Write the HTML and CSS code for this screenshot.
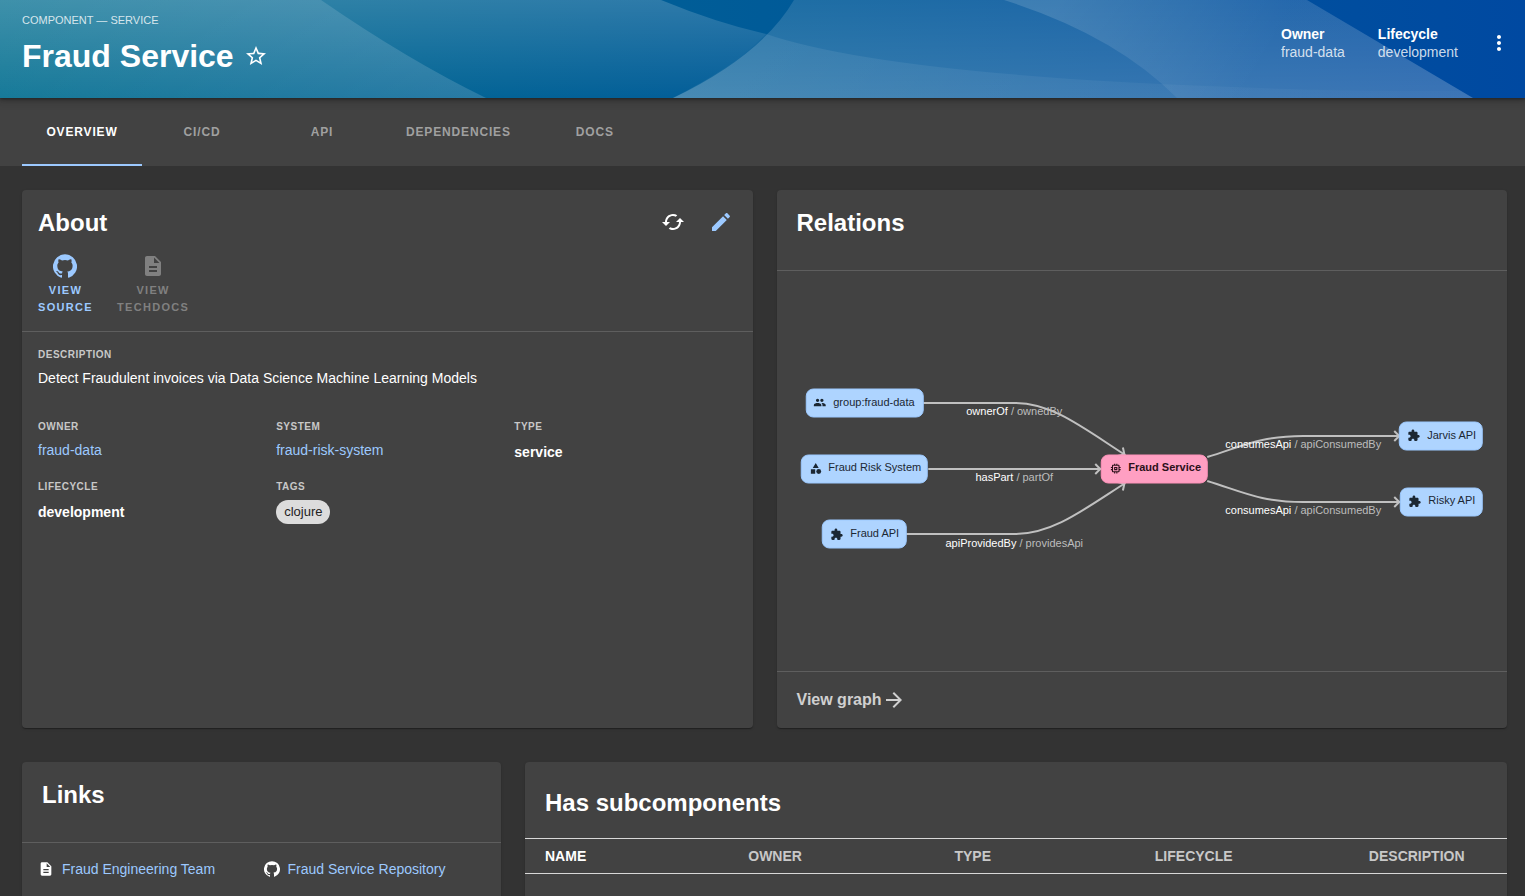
FILE: index.html
```html
<!DOCTYPE html>
<html lang="en">
<head>
<meta charset="utf-8">
<meta name="viewport" content="width=device-width, initial-scale=1">
<title>Fraud Service</title>
<link rel="stylesheet" href="styles.css">
</head>
<body>
<svg class="sprite" aria-hidden="true">
  <symbol id="i-star" viewBox="0 0 24 24"><path d="M22 9.24l-7.19-.62L12 2 9.19 8.63 2 9.24l5.46 4.73L5.82 21 12 17.27 18.18 21l-1.63-7.03L22 9.24zM12 15.4l-3.76 2.27 1-4.28-3.32-2.88 4.38-.38L12 6.1l1.71 4.04 4.38.38-3.32 2.88 1 4.28L12 15.4z"/></symbol>
  <symbol id="i-more" viewBox="0 0 24 24"><path d="M12 8c1.1 0 2-.9 2-2s-.9-2-2-2-2 .9-2 2 .9 2 2 2zm0 2c-1.1 0-2 .9-2 2s.9 2 2 2 2-.9 2-2-.9-2-2-2zm0 6c-1.1 0-2 .9-2 2s.9 2 2 2 2-.9 2-2-.9-2-2-2z"/></symbol>
  <symbol id="i-refresh" viewBox="0 0 24 24"><path d="M19 8l-4 4h3c0 3.31-2.69 6-6 6-1.01 0-1.97-.25-2.8-.7l-1.46 1.46C8.97 19.54 10.43 20 12 20c4.42 0 8-3.58 8-8h3l-4-4zM6 12c0-3.31 2.69-6 6-6 1.01 0 1.97.25 2.8.7l1.46-1.46C15.03 4.46 13.57 4 12 4c-4.42 0-8 3.58-8 8H1l4 4 4-4H6z"/></symbol>
  <symbol id="i-edit" viewBox="0 0 24 24"><path d="M3 17.25V21h3.75L17.81 9.94l-3.75-3.75L3 17.25zM20.71 7.04c.39-.39.39-1.02 0-1.41l-2.34-2.34c-.39-.39-1.02-.39-1.41 0l-1.83 1.83 3.75 3.75 1.83-1.83z"/></symbol>
  <symbol id="i-github" viewBox="0 0 24 24"><path d="M12 .3a12 12 0 0 0-3.8 23.4c.6.1.8-.3.8-.6v-2c-3.3.7-4-1.6-4-1.6-.6-1.4-1.4-1.8-1.4-1.8-1-.7.1-.7.1-.7 1.2 0 1.9 1.2 1.9 1.2 1 1.8 2.8 1.3 3.5 1 0-.8.4-1.3.7-1.6-2.7-.3-5.5-1.3-5.5-6 0-1.2.5-2.3 1.3-3.1-.2-.4-.6-1.6 0-3.2 0 0 1-.3 3.4 1.2a11.5 11.5 0 0 1 6 0c2.3-1.5 3.3-1.2 3.3-1.2.6 1.6.2 2.8 0 3.2.9.8 1.3 1.9 1.3 3.2 0 4.6-2.8 5.6-5.5 5.9.5.4.9 1 .9 2.2v3.3c0 .3.1.7.8.6A12 12 0 0 0 12 .3"/></symbol>
  <symbol id="i-doc" viewBox="0 0 24 24"><path d="M14 2H6c-1.1 0-1.99.9-1.99 2L4 20c0 1.1.89 2 1.99 2H18c1.1 0 2-.9 2-2V8l-6-6zm2 16H8v-2h8v2zm0-4H8v-2h8v2zm-3-5V3.5L18.5 9H13z"/></symbol>
  <symbol id="i-people" viewBox="0 0 24 24"><path d="M16 11c1.66 0 2.99-1.34 2.99-3S17.66 5 16 5c-1.66 0-3 1.34-3 3s1.34 3 3 3zm-8 0c1.66 0 2.99-1.34 2.99-3S9.66 5 8 5C6.34 5 5 6.34 5 8s1.34 3 3 3zm0 2c-2.33 0-7 1.17-7 3.5V19h14v-2.5c0-2.33-4.67-3.5-7-3.5zm8 0c-.29 0-.62.02-.97.05 1.16.84 1.97 1.97 1.97 3.45V19h6v-2.5c0-2.33-4.67-3.5-7-3.5z"/></symbol>
  <symbol id="i-category" viewBox="0 0 24 24"><path d="M12 2l-5.5 9h11zM3 13.5h8v8H3z"/><circle cx="17.5" cy="17.5" r="4.5"/></symbol>
  <symbol id="i-extension" viewBox="0 0 24 24"><path d="M20.5 11H19V7c0-1.1-.9-2-2-2h-4V3.5C13 2.12 11.88 1 10.5 1S8 2.12 8 3.5V5H4c-1.1 0-1.99.9-1.99 2v3.8H3.5c1.49 0 2.7 1.21 2.7 2.7s-1.21 2.7-2.7 2.7H2V20c0 1.1.9 2 2 2h3.8v-1.5c0-1.49 1.21-2.7 2.7-2.7 1.49 0 2.7 1.21 2.7 2.7V22H17c1.1 0 2-.9 2-2v-4h1.5c1.38 0 2.5-1.12 2.5-2.5S21.88 11 20.5 11z"/></symbol>
  <symbol id="i-memory" viewBox="0 0 24 24"><path d="M15 9H9v6h6V9zm-2 4h-2v-2h2v2zm8-2V9h-2V7c0-1.1-.9-2-2-2h-2V3h-2v2h-2V3H9v2H7c-1.1 0-2 .9-2 2v2H3v2h2v2H3v2h2v2c0 1.1.9 2 2 2h2v2h2v-2h2v2h2v-2h2c1.1 0 2-.9 2-2v-2h2v-2h-2v-2h2zm-4 6H7V7h10v10z"/></symbol>
  <symbol id="i-arrow" viewBox="0 0 24 24"><path d="M12 4l-1.41 1.41L16.17 11H4v2h12.17l-5.58 5.59L12 20l8-8z"/></symbol>
</svg>

<header class="header">
  <svg class="header-wave" viewBox="0 0 1525 98" preserveAspectRatio="none" aria-hidden="true">
    <defs>
      <linearGradient id="w1" x1="0" y1="0" x2="0" y2="1"><stop offset="0" stop-color="#fff" stop-opacity=".18"/><stop offset="1" stop-color="#fff" stop-opacity=".01"/></linearGradient>
      <linearGradient id="w2" x1="0" y1="0" x2="1" y2="0"><stop offset="0" stop-color="#fff" stop-opacity=".08"/><stop offset="1" stop-color="#fff" stop-opacity=".15"/></linearGradient>
      <linearGradient id="w3" x1="0" y1="0" x2="0" y2="1"><stop offset="0" stop-color="#fff" stop-opacity=".12"/><stop offset="1" stop-color="#fff" stop-opacity=".21"/></linearGradient>
      <linearGradient id="w4" x1="0" y1="0" x2="1" y2="0"><stop offset="0" stop-color="#fff" stop-opacity=".09"/><stop offset="1" stop-color="#fff" stop-opacity=".01"/></linearGradient>
      <linearGradient id="w5" gradientUnits="userSpaceOnUse" x1="1060" y1="0" x2="1240" y2="98"><stop offset="0" stop-color="#fff" stop-opacity=".14"/><stop offset="1" stop-color="#fff" stop-opacity=".03"/></linearGradient>
    </defs>
    <path fill="url(#w1)" d="M0 0H661Q717 23 766 34Q736 66 673 98H0z"/>
    <path fill="url(#w2)" d="M0 0H321Q408 60 486 98H0z"/>
    <path fill="url(#w3)" d="M794 0H1307L1473 98H673Q762 55 794 0z"/>
    <path fill="url(#w4)" d="M766 34Q890 76 1260 88Q1330 91 1461 91L1473 98H673Q736 66 766 34z"/>
    <path fill="url(#w5)" d="M1004 0H1307L1473 98H1177Q1115 35 1004 0z"/>
  </svg>
  <div class="header-main">
    <p class="header-type">COMPONENT — SERVICE</p>
    <div class="header-title">
      <h1>Fraud Service</h1>
      <button class="icon-button" type="button" aria-label="Add to favorites"><svg class="icon"><use href="#i-star"/></svg></button>
    </div>
  </div>
  <dl class="header-facts">
    <div><dt>Owner</dt><dd>fraud-data</dd></div>
    <div><dt>Lifecycle</dt><dd>development</dd></div>
  </dl>
  <button class="icon-button" type="button" aria-label="More"><svg class="icon"><use href="#i-more"/></svg></button>
</header>

<nav class="tabs" aria-label="Entity">
  <a class="tab tab-active" href="#overview" aria-current="page">OVERVIEW</a>
  <a class="tab" href="#ci-cd">CI/CD</a>
  <a class="tab" href="#api">API</a>
  <a class="tab" href="#dependencies">DEPENDENCIES</a>
  <a class="tab" href="#docs">DOCS</a>
</nav>

<main class="content">
  <section class="card span-6">
    <div class="about-head">
      <div class="about-title">
        <h2>About</h2>
        <div class="about-actions">
          <button class="icon-button" type="button" aria-label="Refresh"><svg class="icon"><use href="#i-refresh"/></svg></button>
          <a class="icon-button accent" href="#edit" aria-label="Edit"><svg class="icon"><use href="#i-edit"/></svg></a>
        </div>
      </div>
      <div class="about-links">
        <a class="about-link accent" href="#source"><svg class="icon"><use href="#i-github"/></svg><span>VIEW<br>SOURCE</span></a>
        <button class="about-link" type="button" disabled><svg class="icon"><use href="#i-doc"/></svg><span>VIEW<br>TECHDOCS</span></button>
      </div>
    </div>
    <dl class="facts">
      <div class="fact fact-wide"><dt>DESCRIPTION</dt><dd>Detect Fraudulent invoices via Data Science Machine Learning Models</dd></div>
      <div class="fact"><dt>OWNER</dt><dd><a class="accent" href="#fraud-data">fraud-data</a></dd></div>
      <div class="fact"><dt>SYSTEM</dt><dd><a class="accent" href="#fraud-risk-system">fraud-risk-system</a></dd></div>
      <div class="fact"><dt>TYPE</dt><dd class="strong">service</dd></div>
      <div class="fact"><dt>LIFECYCLE</dt><dd class="strong">development</dd></div>
      <div class="fact"><dt>TAGS</dt><dd class="tags"><span class="chip">clojure</span></dd></div>
    </dl>
  </section>

  <section class="card span-6">
    <div class="card-head"><h2>Relations</h2></div>
    <svg class="graph" viewBox="0 0 730 400" role="img" aria-label="Relations graph">
      <defs>
        <marker id="tip" viewBox="0 0 9 12" refX="8" refY="6" markerWidth="9" markerHeight="12" markerUnits="userSpaceOnUse" orient="auto"><path class="edge" d="M2 1L7 6L2 11"/></marker>
      </defs>
      <g class="edges">
        <path class="edge" marker-end="url(#tip)" d="M146 132H238C275 132 306 157 348 184"/>
        <path class="edge" marker-end="url(#tip)" d="M151 198H324"/>
        <path class="edge" marker-end="url(#tip)" d="M129 263H238C275 263 306 239 348 212"/>
        <path class="edge" marker-end="url(#tip)" d="M430 186C466 175 483 165 526 165H623"/>
        <path class="edge" marker-end="url(#tip)" d="M430 210C466 221 483 231 526 231H623"/>
      </g>
      <g class="edge-labels">
        <text x="237" y="144">ownerOf <tspan class="dim">/ ownedBy</tspan></text>
        <text x="237" y="210">hasPart <tspan class="dim">/ partOf</tspan></text>
        <text x="237" y="276">apiProvidedBy <tspan class="dim">/ providesApi</tspan></text>
        <text x="526" y="177">consumesApi <tspan class="dim">/ apiConsumedBy</tspan></text>
        <text x="526" y="243">consumesApi <tspan class="dim">/ apiConsumedBy</tspan></text>
      </g>
      <g class="node"><rect x="29" y="118" width="117" height="28" rx="7"/><use href="#i-people" x="36" y="125" width="13" height="13"/><text x="56" y="135">group:fraud-data</text></g>
      <g class="node"><rect x="24" y="184" width="126" height="28" rx="7"/><use href="#i-category" x="32" y="191" width="13" height="13"/><text x="51" y="200">Fraud Risk System</text></g>
      <g class="node"><rect x="45" y="249" width="84" height="28" rx="7"/><use href="#i-extension" x="53" y="257" width="13" height="13"/><text x="73" y="266">Fraud API</text></g>
      <g class="node node-root"><rect x="324" y="184" width="106" height="28" rx="7"/><use href="#i-memory" x="332" y="191" width="13" height="13"/><text x="351" y="200">Fraud Service</text></g>
      <g class="node"><rect x="622" y="151" width="83" height="28" rx="7"/><use href="#i-extension" x="630" y="158" width="13" height="13"/><text x="650" y="168">Jarvis API</text></g>
      <g class="node"><rect x="623" y="217" width="82" height="28" rx="7"/><use href="#i-extension" x="631" y="224" width="13" height="13"/><text x="651" y="233">Risky API</text></g>
    </svg>
    <a class="card-foot" href="#graph">View graph<svg class="icon"><use href="#i-arrow"/></svg></a>
  </section>

  <section class="card span-4">
    <div class="card-head"><h2>Links</h2></div>
    <ul class="links">
      <li><svg class="icon icon-small"><use href="#i-doc"/></svg><a class="accent" href="#team">Fraud Engineering Team</a></li>
      <li><svg class="icon icon-small"><use href="#i-github"/></svg><a class="accent" href="#repo">Fraud Service Repository</a></li>
    </ul>
  </section>

  <section class="card span-8">
    <h2 class="table-title" id="sub">Has subcomponents</h2>
    <table class="table" aria-labelledby="sub">
      <colgroup><col class="col-name"><col class="col-owner"><col class="col-type"><col class="col-lifecycle"><col></colgroup>
      <thead><tr><th scope="col" class="sorted">NAME</th><th scope="col">OWNER</th><th scope="col">TYPE</th><th scope="col">LIFECYCLE</th><th scope="col">DESCRIPTION</th></tr></thead>
    </table>
  </section>
</main>
</body>
</html>
```
FILE: styles.css
```css
* { box-sizing: border-box; }

html, body { height: 100%; }

body {
  margin: 0;
  background: #333;
  color: #fff;
  font: 14px/20px "Liberation Sans", Helvetica, Arial, sans-serif;
  display: flex;
  flex-direction: column;
  overflow: hidden;
}

h1, h2, p, dl, dd, ul { margin: 0; padding: 0; }
h2 { font-size: 24px; line-height: 28px; }
a { color: inherit; text-decoration: none; }
button { font: inherit; color: inherit; background: none; border: 0; padding: 0; }

.sprite { display: none; }
.icon { display: block; width: 24px; height: 24px; fill: currentColor; flex: none; }
.icon-small { width: 16px; height: 16px; }
.icon-button { display: block; cursor: pointer; }
.accent { color: #9cc9ff; }

.header {
  position: relative;
  z-index: 1;
  flex: none;
  display: flex;
  align-items: flex-start;
  height: 98px;
  padding: 12px 14px 0 22px;
  background: linear-gradient(90deg, #006d8f, #0049a1);
  box-shadow: 0 0 8px 3px rgba(20, 20, 20, .3), 0 1px 3px rgba(0, 0, 0, .4);
}
.header > * { position: relative; }
.header .header-wave { position: absolute; inset: 0; width: 100%; height: 100%; }
.header-main { flex: 1; }
.header-type { font-size: 11px; line-height: 16px; color: rgba(255, 255, 255, .8); }
.header-title { display: flex; align-items: center; gap: 10px; margin-top: 8px; }
.header-title h1 { font-size: 32px; line-height: 40px; }
.header-facts { display: flex; gap: 33px; margin: 13px 29px 0 0; line-height: 18px; }
.header-facts dt { font-weight: bold; }
.header-facts dd { color: rgba(255, 255, 255, .8); }
.header > .icon-button { margin-top: 19px; }

.tabs { flex: none; display: flex; padding: 0 22px; background: #424242; }
.tab {
  min-width: 120px;
  height: 68px;
  padding: 24px 24px 0;
  border-bottom: 2px solid transparent;
  color: #a0a0a0;
  font-size: 12px;
  font-weight: bold;
  letter-spacing: 0.07em;
  text-align: center;
}
.tab-active { color: #fff; border-bottom-color: #9cc9ff; }

.content {
  flex: none;
  display: grid;
  grid-template-columns: repeat(12, minmax(0, 1fr));
  gap: 34px 24px;
  padding: 24px 18px 24px 22px;
}
.span-4 { grid-column: span 4; }
.span-6 { grid-column: span 6; }
.span-8 { grid-column: span 8; }
.card {
  background: #424242;
  border-radius: 4px;
  box-shadow: 0 2px 1px -1px rgba(0, 0, 0, .2), 0 1px 1px rgba(0, 0, 0, .14), 0 1px 3px rgba(0, 0, 0, .12);
}
.card-head { height: 81px; padding: 19px 20px; border-bottom: 1px solid #5e5e5e; }

.about-head { padding: 19px 20px 15px 16px; border-bottom: 1px solid #5e5e5e; }
.about-title { display: flex; justify-content: space-between; }
.about-actions { display: flex; align-items: flex-start; gap: 24px; padding-top: 1px; }
.about-links { display: flex; gap: 24px; margin-top: 17px; }
.about-link {
  display: flex;
  flex-direction: column;
  align-items: center;
  gap: 4px;
  font-size: 11px;
  line-height: 17px;
  font-weight: bold;
  letter-spacing: 0.12em;
  text-align: center;
}
.about-link:disabled { color: #808080; }

.facts {
  display: grid;
  grid-template-columns: repeat(3, minmax(0, 1fr));
  padding: 16px 0 16px 16px;
}
.fact { min-height: 60px; }
.fact-wide { grid-column: 1 / -1; min-height: 72px; }
.fact dt {
  color: #c8c8c8;
  font-size: 10px;
  line-height: 14px;
  font-weight: bold;
  letter-spacing: 0.05em;
}
.fact dd { margin-top: 6px; }
.fact .strong { margin-top: 8px; font-weight: bold; }
.fact .tags { display: flex; }
.chip {
  padding: 0 8px;
  border-radius: 12px;
  background: #dcdcdc;
  color: #222;
  font-size: 13px;
  line-height: 24px;
}

.graph { display: block; width: 100%; height: 400px; font-size: 11px; }
.edge { fill: none; stroke: #c0c0c0; stroke-width: 2px; }
.edge-labels { fill: #fff; text-anchor: middle; }
.edge-labels .dim { fill: #bdbdbd; }
.node { fill: #1b2733; }
.node rect { fill: #aed4ff; stroke: #9cc9ff; }
.node-root { fill: #2b1019; font-weight: bold; }
.node-root rect { fill: #ff9fc2; stroke: #ff93ba; }

.card-foot {
  display: flex;
  align-items: center;
  height: 57px;
  padding: 0 20px;
  border-top: 1px solid #5e5e5e;
  color: #d0d0d0;
  font-size: 16px;
  font-weight: bold;
}

.links { display: grid; grid-template-columns: repeat(2, minmax(0, 1fr)); gap: 4px; padding: 16px 16px 24px; list-style: none; }
.links li { display: flex; align-items: center; gap: 8px; }

.table-title { padding: 27px 20px 21px; }
.table { width: 100%; border-collapse: collapse; table-layout: fixed; }
.table th {
  height: 35px;
  padding: 0 20px;
  border-top: 1px solid #d8d8d8;
  border-bottom: 1px solid #d8d8d8;
  color: #c8c8c8;
  text-align: left;
}
.table .sorted { color: #fff; }
.col-name { width: 20.7%; }
.col-owner { width: 21%; }
.col-type { width: 20.4%; }
.col-lifecycle { width: 21.8%; }
```
